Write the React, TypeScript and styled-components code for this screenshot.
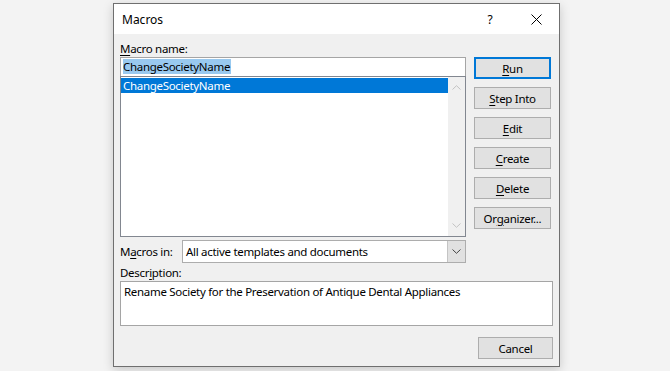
import React from "react";
import styled, { createGlobalStyle } from "styled-components";

const GlobalStyle = createGlobalStyle`
  html, body {
    margin: 0;
    padding: 0;
    background: #f3f3f3;
  }
  body {
    font-family: "Noto Sans", "Liberation Sans", sans-serif;
    font-size: 11.5px;
    letter-spacing: -0.3px;
    color: #000;
  }
`;

const Page = styled.div`
  width: 670px;
  height: 371px;
  box-sizing: border-box;
  padding: 3px 0 0 113px;
`;

const Dialog = styled.div`
  width: 447px;
  height: 364px;
  box-sizing: border-box;
  border: 1px solid #6f6f6f;
  background: #f0f0f0;
  box-shadow: 0 3px 10px rgba(0, 0, 0, 0.18);
  display: flex;
  flex-direction: column;
`;

const TitleBar = styled.div`
  height: 30px;
  flex: none;
  background: #fff;
  display: flex;
  align-items: center;
`;

const Title = styled.div`
  flex: 1;
  padding-left: 8px;
  font-size: 12px;
  letter-spacing: 0;
`;

const TitleButton = styled.div`
  width: 46px;
  height: 30px;
  display: flex;
  align-items: center;
  justify-content: center;
  font-size: 12px;
`;

const Body = styled.div`
  flex: 1;
  display: flex;
  flex-direction: column;
  padding: 7px 6px 6px 6px;
`;

const Label = styled.div`
  line-height: 15px;
  height: 15px;
  white-space: nowrap;
`;

const Key = styled.span`
  text-decoration: underline;
  text-underline-offset: 2px;
`;

const Main = styled.div`
  display: grid;
  grid-template-columns: 346px 1fr;
  column-gap: 8px;
  margin-top: 1px;
`;

const LeftCol = styled.div`
  display: flex;
  flex-direction: column;
`;

const NameInput = styled.div`
  height: 19px;
  box-sizing: border-box;
  border: 1px solid #a5a5a5;
  border-bottom: none;
  background: #fff;
  padding: 1px 0 0 2px;
  line-height: 15px;
`;

const Selected = styled.span`
  background: #99c9ef;
  padding: 0 1px 0 0;
`;

const ListBox = styled.div`
  height: 161px;
  box-sizing: border-box;
  border: 1px solid #828790;
  background: #fff;
  display: flex;
`;

const ListItems = styled.div`
  flex: 1;
  padding-top: 1px;
`;

const ListItem = styled.div<{ $active?: boolean }>`
  height: 15px;
  line-height: 15px;
  padding-left: 2px;
  background: ${(p) => (p.$active ? "#0078d7" : "transparent")};
  color: ${(p) => (p.$active ? "#fff" : "#000")};
`;

const ScrollBar = styled.div`
  width: 17px;
  background: #f0f0f0;
  display: flex;
  flex-direction: column;
  justify-content: space-between;
  align-items: center;
  padding: 8px 0 8px;
`;

const MacrosInRow = styled.div`
  display: grid;
  grid-template-columns: 62px 1fr;
  align-items: center;
  margin-top: 3px;
`;

const Select = styled.div`
  height: 23px;
  box-sizing: border-box;
  border: 1px solid #adadad;
  background: #fff;
  display: flex;
  align-items: center;
`;

const SelectText = styled.div`
  flex: 1;
  padding-left: 3px;
  white-space: nowrap;
`;

const SelectArrow = styled.div`
  width: 17px;
  height: 100%;
  background: #e1e1e1;
  border-left: 1px solid #c4c4c4;
  display: flex;
  align-items: center;
  justify-content: center;
`;

const ButtonCol = styled.div`
  display: flex;
  flex-direction: column;
  gap: 8px;
`;

const Button = styled.div<{ $default?: boolean; $w?: number }>`
  width: ${(p) => p.$w ?? 77}px;
  height: 22px;
  box-sizing: border-box;
  border: ${(p) => (p.$default ? "2px solid #0078d7" : "1px solid #adadad")};
  background: #e1e1e1;
  display: flex;
  align-items: center;
  justify-content: center;
  white-space: nowrap;
`;

const DescLabel = styled(Label)`
  margin-top: 2px;
`;

const DescBox = styled.div`
  margin-top: 1px;
  height: 45px;
  box-sizing: border-box;
  border: 1px solid #a5a5a5;
  background: #fff;
  padding: 2px 3px;
  line-height: 15px;
  white-space: nowrap;
`;

const Footer = styled.div`
  display: flex;
  justify-content: flex-end;
  margin-top: 11px;
`;

const Chevron = ({ up, color }: { up?: boolean; color: string }) => (
  <svg width="9" height="5" viewBox="0 0 9 5">
    <path
      d={up ? "M0.5 4.5 L4.5 0.7 L8.5 4.5" : "M0.5 0.5 L4.5 4.3 L8.5 0.5"}
      fill="none"
      stroke={color}
      strokeWidth="1"
    />
  </svg>
);

const CloseIcon = () => (
  <svg width="11" height="11" viewBox="0 0 11 11">
    <path d="M0.5 0.5 L10.5 10.5 M10.5 0.5 L0.5 10.5" stroke="#000" strokeWidth="1" />
  </svg>
);

export default function App() {
  return (
    <>
      <GlobalStyle />
      <Page>
        <Dialog>
          <TitleBar>
            <Title>Macros</Title>
            <TitleButton>?</TitleButton>
            <TitleButton>
              <CloseIcon />
            </TitleButton>
          </TitleBar>
          <Body>
            <Label>
              <Key>M</Key>acro name:
            </Label>
            <Main>
              <LeftCol>
                <NameInput>
                  <Selected>ChangeSocietyName</Selected>
                </NameInput>
                <ListBox>
                  <ListItems>
                    <ListItem $active>ChangeSocietyName</ListItem>
                  </ListItems>
                  <ScrollBar>
                    <Chevron up color="#c2c2c2" />
                    <Chevron color="#c2c2c2" />
                  </ScrollBar>
                </ListBox>
                <MacrosInRow>
                  <Label>
                    M<Key>a</Key>cros in:
                  </Label>
                  <Select>
                    <SelectText>All active templates and documents</SelectText>
                    <SelectArrow>
                      <Chevron color="#444" />
                    </SelectArrow>
                  </Select>
                </MacrosInRow>
              </LeftCol>
              <ButtonCol>
                <Button $default>
                  <Key>R</Key>un
                </Button>
                <Button>
                  <Key>S</Key>tep Into
                </Button>
                <Button>
                  <Key>E</Key>dit
                </Button>
                <Button>
                  <Key>C</Key>reate
                </Button>
                <Button>
                  <Key>D</Key>elete
                </Button>
                <Button>
                  Or<Key>g</Key>anizer...
                </Button>
              </ButtonCol>
            </Main>
            <DescLabel>
              Descr<Key>i</Key>ption:
            </DescLabel>
            <DescBox>Rename Society for the Preservation of Antique Dental Appliances</DescBox>
            <Footer>
              <Button $w={75}>Cancel</Button>
            </Footer>
          </Body>
        </Dialog>
      </Page>
    </>
  );
}
